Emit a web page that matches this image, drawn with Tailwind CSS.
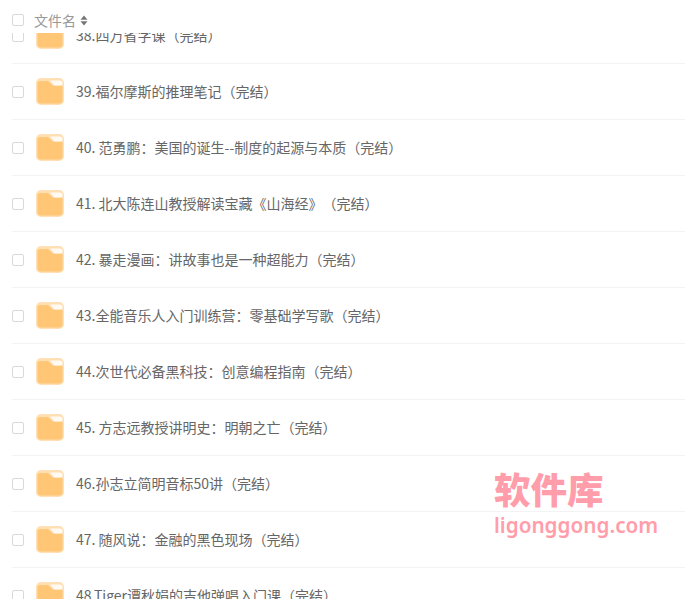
<!DOCTYPE html>
<html lang="zh-CN">
<head>
    <meta charset="UTF-8">
    <title>文件名</title>
    <script src="https://cdn.jsdelivr.net/npm/@tailwindcss/browser@4"></script>
</head>
<body class="bg-white font-['Noto_Sans_CJK_SC','Noto_Sans',sans-serif]">
    <div class="relative h-[604px] w-[685px] overflow-hidden">
        <!-- Sticky table header -->
        <div class="absolute inset-x-0 top-0 z-10 flex h-[33px] items-center bg-white pl-3 pt-[7px]">
            <span class="h-3 w-3 rounded-[2px] border border-[#d9d9d9] bg-white"></span>
            <span class="ml-[10px] text-[14px] text-[#999]">文件名</span>
            <svg class="ml-[4px]" width="8" height="11" viewBox="0 0 8 11"><path d="M4 0.500 7.500 4.800H0.500Z M4 10.500 0.500 6.200H7.500Z" fill="#777"/></svg>
        </div>

        <!-- Rows -->
        <div id="rows" class="h-[599px] overflow-hidden pt-2 pl-3 text-[14px] text-[#666] [text-spacing-trim:space-all]">
            <div class="flex h-[56px] items-center border-b border-[#f3f3f3]">
                <span class="h-3 w-3 rounded-[2px] border border-[#d9d9d9]"></span>
                <svg class="ml-3" width="28" height="27" viewBox="0 0 28 27"><rect width="28" height="27" rx="5" fill="#ffdfb3"/><path d="M1.500 5.500a2.500 2.500 0 0 1 2.500-2.500h8l5 4.500H26.500V22.500a3 3 0 0 1-3 3H4.500a3 3 0 0 1-3-3Z" fill="#ffc675"/><path d="M14 2.500H24a2.500 2.500 0 0 1 2.500 2.500V7.500H18Z" fill="#fffaf2"/></svg>
                <span class="ml-3">38.四万省字课（完结）</span>
            </div>
            <div class="flex h-[56px] items-center border-b border-[#f3f3f3]">
                <span class="h-3 w-3 rounded-[2px] border border-[#d9d9d9]"></span>
                <svg class="ml-3" width="28" height="27" viewBox="0 0 28 27"><rect width="28" height="27" rx="5" fill="#ffdfb3"/><path d="M1.500 5.500a2.500 2.500 0 0 1 2.500-2.500h8l5 4.500H26.500V22.500a3 3 0 0 1-3 3H4.500a3 3 0 0 1-3-3Z" fill="#ffc675"/><path d="M14 2.500H24a2.500 2.500 0 0 1 2.500 2.500V7.500H18Z" fill="#fffaf2"/></svg>
                <span class="ml-3">39.福尔摩斯的推理笔记（完结）</span>
            </div>
            <div class="flex h-[56px] items-center border-b border-[#f3f3f3]">
                <span class="h-3 w-3 rounded-[2px] border border-[#d9d9d9]"></span>
                <svg class="ml-3" width="28" height="27" viewBox="0 0 28 27"><rect width="28" height="27" rx="5" fill="#ffdfb3"/><path d="M1.500 5.500a2.500 2.500 0 0 1 2.500-2.500h8l5 4.500H26.500V22.500a3 3 0 0 1-3 3H4.500a3 3 0 0 1-3-3Z" fill="#ffc675"/><path d="M14 2.500H24a2.500 2.500 0 0 1 2.500 2.500V7.500H18Z" fill="#fffaf2"/></svg>
                <span class="ml-3">40. 范勇鹏：美国的诞生--制度的起源与本质（完结）</span>
            </div>
            <div class="flex h-[56px] items-center border-b border-[#f3f3f3]">
                <span class="h-3 w-3 rounded-[2px] border border-[#d9d9d9]"></span>
                <svg class="ml-3" width="28" height="27" viewBox="0 0 28 27"><rect width="28" height="27" rx="5" fill="#ffdfb3"/><path d="M1.500 5.500a2.500 2.500 0 0 1 2.500-2.500h8l5 4.500H26.500V22.500a3 3 0 0 1-3 3H4.500a3 3 0 0 1-3-3Z" fill="#ffc675"/><path d="M14 2.500H24a2.500 2.500 0 0 1 2.500 2.500V7.500H18Z" fill="#fffaf2"/></svg>
                <span class="ml-3">41. 北大陈连山教授解读宝藏《山海经》（完结）</span>
            </div>
            <div class="flex h-[56px] items-center border-b border-[#f3f3f3]">
                <span class="h-3 w-3 rounded-[2px] border border-[#d9d9d9]"></span>
                <svg class="ml-3" width="28" height="27" viewBox="0 0 28 27"><rect width="28" height="27" rx="5" fill="#ffdfb3"/><path d="M1.500 5.500a2.500 2.500 0 0 1 2.500-2.500h8l5 4.500H26.500V22.500a3 3 0 0 1-3 3H4.500a3 3 0 0 1-3-3Z" fill="#ffc675"/><path d="M14 2.500H24a2.500 2.500 0 0 1 2.500 2.500V7.500H18Z" fill="#fffaf2"/></svg>
                <span class="ml-3">42. 暴走漫画：讲故事也是一种超能力（完结）</span>
            </div>
            <div class="flex h-[56px] items-center border-b border-[#f3f3f3]">
                <span class="h-3 w-3 rounded-[2px] border border-[#d9d9d9]"></span>
                <svg class="ml-3" width="28" height="27" viewBox="0 0 28 27"><rect width="28" height="27" rx="5" fill="#ffdfb3"/><path d="M1.500 5.500a2.500 2.500 0 0 1 2.500-2.500h8l5 4.500H26.500V22.500a3 3 0 0 1-3 3H4.500a3 3 0 0 1-3-3Z" fill="#ffc675"/><path d="M14 2.500H24a2.500 2.500 0 0 1 2.500 2.500V7.500H18Z" fill="#fffaf2"/></svg>
                <span class="ml-3">43.全能音乐人入门训练营：零基础学写歌（完结）</span>
            </div>
            <div class="flex h-[56px] items-center border-b border-[#f3f3f3]">
                <span class="h-3 w-3 rounded-[2px] border border-[#d9d9d9]"></span>
                <svg class="ml-3" width="28" height="27" viewBox="0 0 28 27"><rect width="28" height="27" rx="5" fill="#ffdfb3"/><path d="M1.500 5.500a2.500 2.500 0 0 1 2.500-2.500h8l5 4.500H26.500V22.500a3 3 0 0 1-3 3H4.500a3 3 0 0 1-3-3Z" fill="#ffc675"/><path d="M14 2.500H24a2.500 2.500 0 0 1 2.500 2.500V7.500H18Z" fill="#fffaf2"/></svg>
                <span class="ml-3">44.次世代必备黑科技：创意编程指南（完结）</span>
            </div>
            <div class="flex h-[56px] items-center border-b border-[#f3f3f3]">
                <span class="h-3 w-3 rounded-[2px] border border-[#d9d9d9]"></span>
                <svg class="ml-3" width="28" height="27" viewBox="0 0 28 27"><rect width="28" height="27" rx="5" fill="#ffdfb3"/><path d="M1.500 5.500a2.500 2.500 0 0 1 2.500-2.500h8l5 4.500H26.500V22.500a3 3 0 0 1-3 3H4.500a3 3 0 0 1-3-3Z" fill="#ffc675"/><path d="M14 2.500H24a2.500 2.500 0 0 1 2.500 2.500V7.500H18Z" fill="#fffaf2"/></svg>
                <span class="ml-3">45. 方志远教授讲明史：明朝之亡（完结）</span>
            </div>
            <div class="flex h-[56px] items-center border-b border-[#f3f3f3]">
                <span class="h-3 w-3 rounded-[2px] border border-[#d9d9d9]"></span>
                <svg class="ml-3" width="28" height="27" viewBox="0 0 28 27"><rect width="28" height="27" rx="5" fill="#ffdfb3"/><path d="M1.500 5.500a2.500 2.500 0 0 1 2.500-2.500h8l5 4.500H26.500V22.500a3 3 0 0 1-3 3H4.500a3 3 0 0 1-3-3Z" fill="#ffc675"/><path d="M14 2.500H24a2.500 2.500 0 0 1 2.500 2.500V7.500H18Z" fill="#fffaf2"/></svg>
                <span class="ml-3">46.孙志立简明音标50讲（完结）</span>
            </div>
            <div class="flex h-[56px] items-center border-b border-[#f3f3f3]">
                <span class="h-3 w-3 rounded-[2px] border border-[#d9d9d9]"></span>
                <svg class="ml-3" width="28" height="27" viewBox="0 0 28 27"><rect width="28" height="27" rx="5" fill="#ffdfb3"/><path d="M1.500 5.500a2.500 2.500 0 0 1 2.500-2.500h8l5 4.500H26.500V22.500a3 3 0 0 1-3 3H4.500a3 3 0 0 1-3-3Z" fill="#ffc675"/><path d="M14 2.500H24a2.500 2.500 0 0 1 2.500 2.500V7.500H18Z" fill="#fffaf2"/></svg>
                <span class="ml-3">47. 随风说：金融的黑色现场（完结）</span>
            </div>
            <div class="flex h-[56px] items-center border-b border-[#f3f3f3]">
                <span class="h-3 w-3 rounded-[2px] border border-[#d9d9d9]"></span>
                <svg class="ml-3" width="28" height="27" viewBox="0 0 28 27"><rect width="28" height="27" rx="5" fill="#ffdfb3"/><path d="M1.500 5.500a2.500 2.500 0 0 1 2.500-2.500h8l5 4.500H26.500V22.500a3 3 0 0 1-3 3H4.500a3 3 0 0 1-3-3Z" fill="#ffc675"/><path d="M14 2.500H24a2.500 2.500 0 0 1 2.500 2.500V7.500H18Z" fill="#fffaf2"/></svg>
                <span class="ml-3">48.Tiger谭秋娟的吉他弹唱入门课（完结）</span>
            </div>
        </div>

        <!-- Watermark -->
        <div class="absolute left-[494px] top-[467px] text-[#ff9dab]">
            <div class="text-[36.500px] leading-[44px] font-black">软件库</div>
            <div class="text-[20.700px] leading-[28px] font-['Noto_Sans'] font-semibold">ligonggong.com</div>
        </div>
    </div>
</body>
</html>
